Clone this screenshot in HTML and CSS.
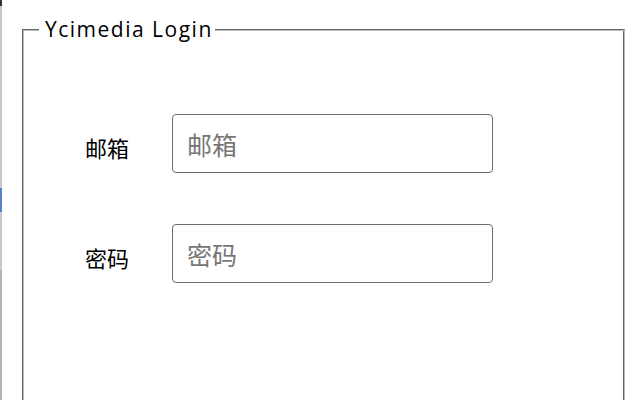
FILE: index.html
```
<!DOCTYPE html>
<html>
<head>
<meta charset="utf-8">
<link rel="stylesheet" href="styles.css">
</head>
<body>
<div class="page">
  <div class="edge"></div>
  <fieldset class="login">
    <legend class="login-title">Ycimedia Login</legend>
    <form class="login-form">
      <label class="field-label" for="email">邮箱</label>
      <input class="field-input" id="email" type="text" placeholder="邮箱">
      <label class="field-label" for="pwd">密码</label>
      <input class="field-input" id="pwd" type="password" placeholder="密码">
    </form>
  </fieldset>
</div>
</body>
</html>
```
FILE: styles.css
```
html, body {
  margin: 0;
  padding: 0;
  background: #fff;
  height: 400px;
  overflow: hidden;
}
.page {
  display: flex;
  align-items: flex-start;
  font-family: "Lato", "Noto Sans CJK SC", sans-serif;
}
.edge {
  width: 2px;
  height: 400px;
  flex: none;
  background: linear-gradient(to bottom,
    #333 0, #333 6px,
    #c8c8c8 6px, #c8c8c8 188px,
    #5a80d0 188px, #5a80d0 212px,
    #c8c8c8 212px, #c8c8c8 270px,
    #b4b4b4 270px, #b4b4b4 400px);
}
.login {
  margin: 17px 0 0 20px;
  width: 603px;
  box-sizing: border-box;
  height: 460px;
  padding: 1px 15px 0;
  border-style: solid;
  border-width: 1px;
  border-color: #666 #bbb #bbb #666;
  box-shadow: inset 1px 1px 0 #bbb, inset -1px -1px 0 #666;
  flex: none;
}
.login-title {
  font-family: "Open Sans", sans-serif;
  font-size: 21px;
  letter-spacing: 1.5px;
  padding: 0 2px 0 6px;
  margin-left: 1px;
  background: #fff;
  color: #000;
  line-height: 24px;
}
.login-form {
  display: grid;
  grid-template-columns: 87px 321px;
  row-gap: 51px;
  align-items: center;
  padding: 72px 0 0 47px;
}
.field-label {
  font-family: "Noto Sans CJK SC", sans-serif;
  font-size: 22px;
  color: #000;
  padding-top: 6px;
}
.field-input {
  box-sizing: border-box;
  width: 321px;
  height: 59px;
  margin: 0;
  border: 1px solid #6f6f6f;
  border-radius: 4px;
  padding: 0 14px;
  font-family: "Noto Sans CJK SC", sans-serif;
  font-size: 25px;
  outline: none;
}
.field-input::placeholder {
  color: #767676;
}
```
